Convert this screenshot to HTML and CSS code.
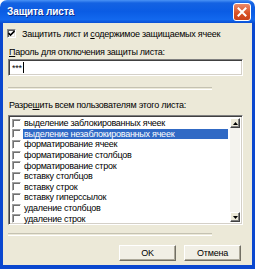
FILE: index.html
```html
<!DOCTYPE html>
<html lang="ru">
<head>
    <meta charset="UTF-8">
    <title>Защита листа</title>
    <link rel="stylesheet" href="styles.css">
</head>
<body>
    <div class="window">
        <div class="titlebar">
            <span class="title">Защита листа</span>
            <span class="close">
                <svg width="10" height="10" viewBox="0 0 10 10"><path d="M1.5 1.5 L8.5 8.5 M8.5 1.5 L1.5 8.5" stroke="#fff" stroke-width="2" stroke-linecap="square"/></svg>
            </span>
        </div>
        <div class="frame">
            <div class="body">
                <div class="check-row">
                    <span class="cb">
                        <svg width="7" height="7" viewBox="0 0 7 7"><path d="M0.5 3 L2.5 5 L6.5 1" stroke="#000" stroke-width="1.6" fill="none"/></svg>
                    </span>
                    <span>Защитить лист и <u>с</u>одержимое защищаемых ячеек</span>
                </div>
                <div class="label"><u>П</u>ароль для отключения защиты листа:</div>
                <div class="input">***<span class="caret"></span></div>
                <div class="sep"></div>
                <div class="label">Разре<u>ш</u>ить всем пользователям этого листа:</div>
                <div class="listbox">
                    <ul class="items">
                        <li><span class="cb"></span><span class="text">выделение заблокированных ячеек</span></li>
                        <li class="selected"><span class="cb"></span><span class="text">выделение незаблокированных ячеек</span></li>
                        <li><span class="cb"></span><span class="text">форматирование ячеек</span></li>
                        <li><span class="cb"></span><span class="text">форматирование столбцов</span></li>
                        <li><span class="cb"></span><span class="text">форматирование строк</span></li>
                        <li><span class="cb"></span><span class="text">вставку столбцов</span></li>
                        <li><span class="cb"></span><span class="text">вставку строк</span></li>
                        <li><span class="cb"></span><span class="text">вставку гиперссылок</span></li>
                        <li><span class="cb"></span><span class="text">удаление столбцов</span></li>
                        <li><span class="cb"></span><span class="text">удаление строк</span></li>
                    </ul>
                    <div class="scrollbar">
                        <span class="arrow">
                            <svg width="5" height="3" viewBox="0 0 5 3"><path d="M0 3 L2.5 0 L5 3 Z" fill="#000"/></svg>
                        </span>
                        <span class="track"></span>
                        <span class="arrow">
                            <svg width="5" height="3" viewBox="0 0 5 3"><path d="M0 0 L5 0 L2.5 3 Z" fill="#000"/></svg>
                        </span>
                    </div>
                </div>
                <div class="sep sep-bottom"></div>
                <div class="buttons">
                    <span class="btn">OK</span>
                    <span class="btn">Отмена</span>
                </div>
            </div>
        </div>
    </div>
</body>
</html>
```

FILE: styles.css
```css
body{
    margin: 0;
    background: #ffffff;
    font-family: "Liberation Sans", Arial, sans-serif;
    font-size: 9px;
    letter-spacing: -0.25px;
    color: #000;
}

.window{
    width: 255px;
    height: 269px;
    display: flex;
    flex-direction: column;
    border-radius: 7px 7px 0 0;
    overflow: hidden;
}

.titlebar{
    height: 23px;
    flex: none;
    display: flex;
    align-items: center;
    justify-content: space-between;
    padding: 0 4px 0 7px;
    background: linear-gradient(to bottom, #4a93f6 0px, #1462e2 3px, #0a5ce4 50%, #1268ee 85%, #0a4fd4 100%);
}

.title{
    color: #fff;
    font-weight: bold;
    font-size: 10px;
    letter-spacing: -0.1px;
    text-shadow: 1px 1px #0b2a8f;
}

.close{
    width: 16px;
    height: 16px;
    border: 1px solid #fff;
    border-radius: 3px;
    background: linear-gradient(to bottom, #eb8a6a, #d84f23 60%, #c9431c);
    display: flex;
    align-items: center;
    justify-content: center;
}

.frame{
    flex: 1;
    display: flex;
    border-left: 3px solid #0a47cf;
    border-right: 3px solid #0a47cf;
    border-bottom: 4px solid #0a47cf;
}

.body{
    flex: 1;
    background: #ece9d8;
    padding: 5px 9px 0 5px;
    display: flex;
    flex-direction: column;
}

.check-row{
    height: 11px;
    display: flex;
    align-items: center;
    gap: 6px;
    margin-left: -1px;
}

.cb{
    width: 9px;
    height: 9px;
    box-sizing: border-box;
    flex: none;
    background: #fff;
    border-top: 1px solid #8a8a8a;
    border-left: 1px solid #8a8a8a;
    border-right: 1px solid #fff;
    border-bottom: 1px solid #fff;
    box-shadow: inset 1px 1px #5a5a5a, inset -1px -1px #e4e2da;
    display: flex;
    align-items: center;
    justify-content: center;
}

.items .cb{
    border-top-color: #a0a0a0;
    border-left-color: #a0a0a0;
    box-shadow: inset 1px 1px #707070;
}

.label{
    height: 11px;
    line-height: 11px;
    margin-top: 8px;
    padding-left: 1px;
}

.sep + .label{
    margin-top: 10px;
}

.input{
    margin-top: 1px;
    height: 17px;
    box-sizing: border-box;
    background: #fff;
    border-top: 1px solid #808080;
    border-left: 1px solid #808080;
    border-right: 1px solid #fff;
    border-bottom: 1px solid #fff;
    box-shadow: inset 1px 1px #404040, inset -1px -1px #d4d0c8;
    padding: 2px 0 0 3px;
    line-height: 12px;
    display: flex;
    align-items: flex-start;
}

.caret{
    width: 1px;
    height: 11px;
    background: #000;
    margin-left: 1px;
}

.sep{
    margin-top: 11px;
    width: 204px;
    height: 1px;
    border-top: 1px solid #c5c2b2;
    border-bottom: 1px solid #fff;
}

.sep-bottom{
    margin-top: 8px;
}

.listbox{
    margin-top: 4px;
    height: 110px;
    box-sizing: border-box;
    background: #fff;
    border-top: 1px solid #808080;
    border-left: 1px solid #808080;
    border-right: 1px solid #fff;
    border-bottom: 1px solid #fff;
    box-shadow: inset 1px 1px #404040, inset -1px -1px #d4d0c8;
    padding: 2px;
    display: flex;
}

.items{
    list-style: none;
    margin: 0;
    padding: 0;
    flex: 1;
}

.items li{
    height: 10.6px;
    display: flex;
    align-items: center;
    gap: 2px;
    padding-left: 1px;
}

.items .text{
    flex: 1;
    height: 10px;
    line-height: 10px;
    padding-left: 1px;
    margin-right: 2px;
}

.items .selected .text{
    background: #316ac5;
    color: #fff;
}

.scrollbar{
    width: 10px;
    display: flex;
    flex-direction: column;
    background: #f4f3ee;
}

.arrow{
    height: 10px;
    box-sizing: border-box;
    background: #ece9d8;
    border-top: 1px solid #fff;
    border-left: 1px solid #fff;
    border-right: 1px solid #404040;
    border-bottom: 1px solid #404040;
    box-shadow: inset -1px -1px #808080;
    display: flex;
    align-items: center;
    justify-content: center;
}

.track{
    flex: 1;
}

.buttons{
    margin-top: 9px;
    display: flex;
    justify-content: flex-end;
    gap: 8px;
    padding-right: 2px;
}

.btn{
    width: 57px;
    height: 16px;
    box-sizing: border-box;
    background: #f1efe5;
    border-top: 1px solid #fff;
    border-left: 1px solid #fff;
    border-right: 1px solid #716f64;
    border-bottom: 1px solid #716f64;
    box-shadow: inset -1px -1px #aca899;
    display: flex;
    align-items: center;
    justify-content: center;
}
```
